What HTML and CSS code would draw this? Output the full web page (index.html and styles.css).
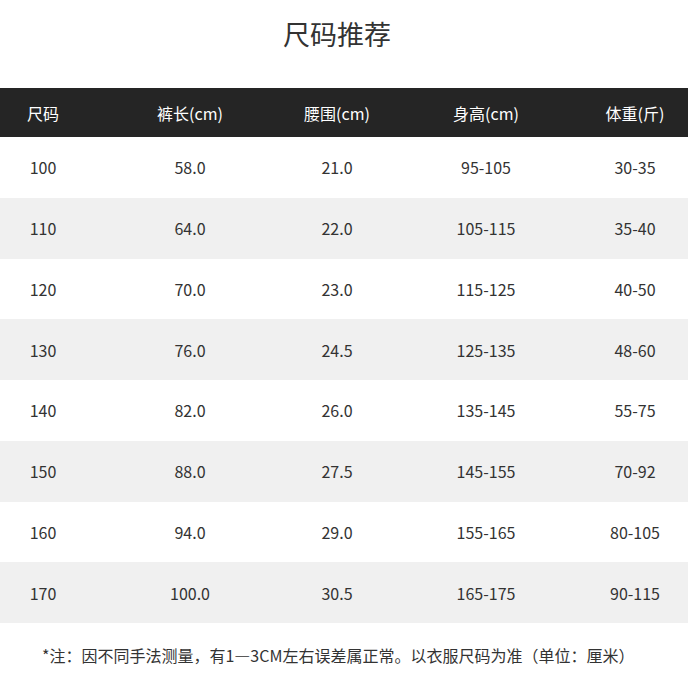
FILE: index.html
```html
<!DOCTYPE html>
<html lang="zh-CN">
<head>
<meta charset="utf-8">
<title>尺码推荐</title>
<link rel="stylesheet" href="styles.css">
</head>
<body>
<div class="page">
  <h1 class="title">尺码推荐</h1>
  <div class="table">
    <div class="row head">
      <div class="cell">尺码</div><div class="cell">裤长(cm)</div><div class="cell">腰围(cm)</div><div class="cell">身高(cm)</div><div class="cell">体重(斤)</div>
    </div>
    <div class="row">
      <div class="cell">100</div><div class="cell">58.0</div><div class="cell">21.0</div><div class="cell">95-105</div><div class="cell">30-35</div>
    </div>
    <div class="row alt">
      <div class="cell">110</div><div class="cell">64.0</div><div class="cell">22.0</div><div class="cell">105-115</div><div class="cell">35-40</div>
    </div>
    <div class="row">
      <div class="cell">120</div><div class="cell">70.0</div><div class="cell">23.0</div><div class="cell">115-125</div><div class="cell">40-50</div>
    </div>
    <div class="row alt">
      <div class="cell">130</div><div class="cell">76.0</div><div class="cell">24.5</div><div class="cell">125-135</div><div class="cell">48-60</div>
    </div>
    <div class="row">
      <div class="cell">140</div><div class="cell">82.0</div><div class="cell">26.0</div><div class="cell">135-145</div><div class="cell">55-75</div>
    </div>
    <div class="row alt">
      <div class="cell">150</div><div class="cell">88.0</div><div class="cell">27.5</div><div class="cell">145-155</div><div class="cell">70-92</div>
    </div>
    <div class="row">
      <div class="cell">160</div><div class="cell">94.0</div><div class="cell">29.0</div><div class="cell">155-165</div><div class="cell">80-105</div>
    </div>
    <div class="row alt">
      <div class="cell">170</div><div class="cell">100.0</div><div class="cell">30.5</div><div class="cell">165-175</div><div class="cell">90-115</div>
    </div>
  </div>
  <p class="note">*注：因不同手法测量，有1—3CM左右误差属正常。以衣服尺码为准（单位：厘米）</p>
</div>
</body>
</html>
```

FILE: styles.css
```css
html, body {
  margin: 0;
  padding: 0;
  background: #ffffff;
}

body {
  font-family: "Noto Sans CJK SC", "Noto Sans", sans-serif;
  color: #333333;
}

.page {
  width: 688px;
}

.title {
  margin: 14px 0 0 0;
  padding-right: 14px;
  height: 40px;
  line-height: 40px;
  font-size: 27px;
  font-weight: 400;
  text-align: center;
  color: #333333;
}

.table {
  margin-top: 34px;
  display: flex;
  flex-direction: column;
}

.row {
  display: grid;
  grid-template-columns: 86px 208px 86px 212px 86px;
  height: 60.75px;
  align-items: center;
  font-size: 16px;
  color: #333333;
}

.row.alt {
  background: #f0f0f0;
}

.row.head {
  height: 49px;
  background: #252525;
  color: #ffffff;
}

.cell {
  text-align: center;
  white-space: nowrap;
}

.note {
  margin: 20px 0 0 0;
  padding-left: 42px;
  font-size: 16px;
  line-height: 24px;
  color: #333333;
  white-space: nowrap;
}
```
